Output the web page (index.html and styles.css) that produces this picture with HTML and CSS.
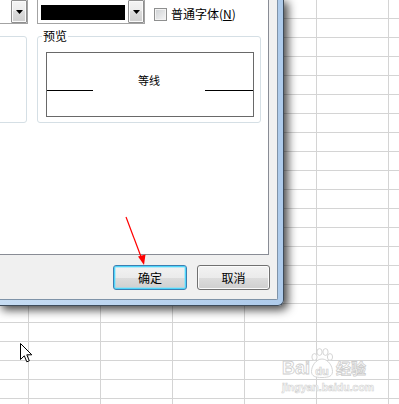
FILE: index.html
```html
<!DOCTYPE html>
<html lang="zh-CN">
<head>
<meta charset="utf-8">
<title>设置单元格格式</title>
<link rel="stylesheet" href="styles.css">
</head>
<body>
<div class="dialog">
  <div class="client">
    <div class="panel">
      <div class="toprow">
        <div class="combo combo-left">
          <span class="field"></span>
          <span class="dd"><svg width="7" height="4" viewBox="0 0 7 4"><path d="M0 0h7L3.5 4z"/></svg></span>
        </div>
        <div class="combo combo-color">
          <span class="swatch"></span>
          <span class="dd"><svg width="7" height="4" viewBox="0 0 7 4"><path d="M0 0h7L3.5 4z"/></svg></span>
        </div>
        <label class="check"><span class="box"></span><span>普通字体(<u>N</u>)</span></label>
      </div>
      <div class="groups">
        <div class="group group-left"></div>
        <div class="group group-preview">
          <span class="legend">预览</span>
          <div class="preview">
            <span class="line line-l"></span>
            <span class="sample">等线</span>
            <span class="line line-r"></span>
          </div>
        </div>
      </div>
    </div>
    <div class="footer">
      <button class="btn btn-default">确定</button>
      <button class="btn">取消</button>
    </div>
  </div>
</div>

<svg class="annot" width="30" height="60" viewBox="0 0 30 60">
  <line x1="6" y1="7" x2="21.5" y2="48" stroke="#ff0000" stroke-width="1.2"/>
  <polygon points="24,55 18,46.5 25.5,44.5" fill="#ff0000"/>
</svg>

<svg class="cursor" width="13" height="20" viewBox="0 0 13 20">
  <path d="M0.5 0.5V16.5L4.3 12.8L6.8 18.8L9.3 17.8L6.8 11.8H11.8Z" fill="#fff" stroke="#000" stroke-width="1" stroke-linejoin="miter"/>
</svg>

<div class="wm">
  <div class="wm-logo">
    <span class="wm-bai">Bai</span>
    <svg class="wm-paw" width="24" height="30" viewBox="0 0 24 30">
      <ellipse cx="4.5" cy="9" rx="2.6" ry="3.4" />
      <ellipse cx="9.5" cy="4" rx="2.6" ry="3.4" />
      <ellipse cx="15.5" cy="4" rx="2.6" ry="3.4" />
      <ellipse cx="20" cy="9" rx="2.6" ry="3.4" />
      <path d="M12 11C6 11 1.5 18 1.5 23.5C1.5 28 5 29.5 12 29.5C19 29.5 22.5 28 22.5 23.5C22.5 18 18 11 12 11Z"/>
      <text x="12" y="26.5" text-anchor="middle">du</text>
    </svg>
    <span class="wm-jy">经验</span>
  </div>
  <div class="wm-url">jingyan.baidu.com</div>
</div>
</body>
</html>
```

FILE: styles.css
```css
* {
  box-sizing: border-box;
}

html,
body {
  margin: 0;
}

body {
  width: 399px;
  height: 404px;
  overflow: hidden;
  position: relative;
  background-color: #ffffff;
  background-image:
    linear-gradient(to right, #d4d4d4 1px, transparent 1px),
    linear-gradient(to bottom, #d4d4d4 1px, transparent 1px);
  background-size: 72px 19px;
  background-position: 28px 18px;
  font-family: "Noto Sans CJK SC", "Microsoft YaHei", sans-serif;
  font-size: 12px;
  color: #000;
}

/* ---------- dialog window ---------- */
.dialog {
  width: 284px;
  height: 306px;
  padding: 0 5px 5px 0;
  background: linear-gradient(to right, #c6dcf3, #aecbeb);
  border-right: 1px solid #3e4c5b;
  border-bottom: 1px solid #3e4c5b;
  border-bottom-right-radius: 6px;
  box-shadow: 3px 3px 10px 1px rgba(0, 0, 0, 0.72);
}

.client {
  height: 100%;
  display: flex;
  flex-direction: column;
  background: #f0f0f0;
  border-right: 1px solid #7f93a8;
  border-bottom: 1px solid #7f93a8;
  border-bottom-right-radius: 2px;
}

.panel {
  width: 269px;
  height: 255px;
  background: #fff;
  border-right: 1px solid #898c95;
  border-bottom: 1px solid #898c95;
  overflow: hidden;
}

/* ---------- top row ---------- */
.toprow {
  display: flex;
  align-items: flex-start;
  height: 25px;
  margin-top: -1px;
}

.combo {
  display: flex;
  height: 25px;
  border: 1px solid #a3a3a3;
  background: #fff;
  flex-shrink: 0;
}

.combo-left {
  width: 40px;
  margin-left: -12px;
}

.field {
  flex: 1;
}

.combo-color {
  width: 108px;
  margin-left: 9px;
  padding-left: 3px;
}

.swatch {
  width: 84px;
  height: 15px;
  margin-top: 5px;
  margin-right: 3px;
  background: #000;
}

.dd {
  width: 16px;
  display: flex;
  align-items: center;
  justify-content: center;
  border: 1px solid #8f8f8f;
  border-radius: 1px;
  background: linear-gradient(#f4f4f4, #ebebeb 50%, #dcdcdc 50%, #cfcfcf);
  box-shadow: inset 0 0 0 1px #fafafa;
}

.dd svg {
  display: block;
  fill: #000;
}

.check {
  display: flex;
  align-items: center;
  gap: 4px;
  margin-left: 9px;
  margin-top: 8px;
  line-height: 14px;
  white-space: nowrap;
}

.box {
  width: 13px;
  height: 13px;
  border: 1px solid #8e8f8f;
  background: linear-gradient(135deg, #cdd0d3, #f6f6f6);
  box-shadow: inset 0 0 0 1px #f3f3f3;
}

/* ---------- group boxes ---------- */
.groups {
  display: flex;
  height: 87px;
  margin-top: 12px;
}

.group {
  position: relative;
  border: 1px solid #d5dfe5;
  border-radius: 3px;
  flex-shrink: 0;
}

.group-left {
  width: 40px;
  margin-left: -13px;
}

.group-preview {
  width: 224px;
  margin-left: 10px;
  padding: 15px 6px 5px 8px;
}

.legend {
  position: absolute;
  left: 4px;
  top: -8px;
  padding: 0 1px;
  background: #fff;
  line-height: 14px;
}

.preview {
  height: 65px;
  border: 1px solid #696969;
  display: flex;
  align-items: flex-start;
}

.line {
  height: 1px;
  margin-top: 37px;
  background: #000;
  flex-shrink: 0;
}

.line-l {
  width: 46px;
}

.line-r {
  width: 48px;
}

.sample {
  flex: 1;
  text-align: center;
  font-size: 11px;
  line-height: 13px;
  padding-top: 21px;
}

/* ---------- footer buttons ---------- */
.footer {
  display: flex;
  justify-content: flex-end;
  gap: 10px;
  padding: 10px 7px 0 0;
}

.btn {
  width: 73px;
  height: 25px;
  padding: 0;
  border: 1px solid #707070;
  border-radius: 3px;
  background: linear-gradient(#f2f2f2, #ebebeb 50%, #dddddd 50%, #cfcfcf);
  box-shadow: inset 0 0 0 1px #fbfbfb;
  font: inherit;
  font-size: 12px;
  color: #000;
}

.btn-default {
  width: 74px;
  border-color: #3c7fb1;
  box-shadow: inset 0 0 0 1px #4fd6fb, inset 0 0 0 2px rgba(120, 225, 252, 0.45);
}

/* ---------- overlays ---------- */
.annot {
  position: absolute;
  left: 120px;
  top: 210px;
}

.cursor {
  position: absolute;
  left: 20px;
  top: 343px;
}

.wm {
  position: absolute;
  left: 282px;
  top: 348px;
  color: #fff;
  font-family: "Liberation Sans", Arial, sans-serif;
}

.wm-logo {
  display: flex;
  align-items: flex-end;
  height: 30px;
}

.wm-bai {
  font-size: 18px;
  font-weight: bold;
  line-height: 18px;
  -webkit-text-stroke: 0.8px #cdcdcd;
  margin-bottom: 1px;
}

.wm-paw {
  display: block;
  fill: #fff;
  stroke: #d0d0d0;
  stroke-width: 0.9;
}

.wm-paw text {
  font-family: "Liberation Sans", Arial, sans-serif;
  font-size: 11px;
  font-weight: bold;
  fill: #fff;
  stroke: #cfcfcf;
  stroke-width: 0.7;
}

.wm-jy {
  font-family: "Noto Sans CJK SC", sans-serif;
  font-size: 15px;
  font-weight: bold;
  line-height: 18px;
  margin-left: 2px;
  margin-bottom: 1px;
  -webkit-text-stroke: 0.8px #cdcdcd;
}

.wm-url {
  margin-top: 4px;
  font-size: 10.5px;
  font-weight: bold;
  line-height: 11px;
  -webkit-text-stroke: 0.6px #d2d2d2;
}
```
